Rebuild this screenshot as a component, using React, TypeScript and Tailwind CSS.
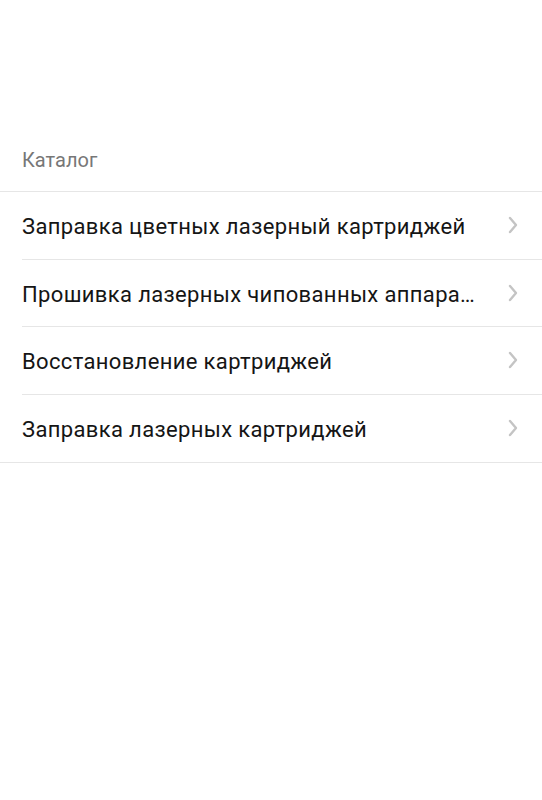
const items = [
  "Заправка цветных лазерный картриджей",
  "Прошивка лазерных чипованных аппаратов",
  "Восстановление картриджей",
  "Заправка лазерных картриджей",
];

function Chevron() {
  return (
    <svg width="10" height="18" viewBox="0 0 10 18" fill="none" className="shrink-0">
      <path d="M2 2l6 7-6 7" stroke="#c4c4c4" strokeWidth="2.4" strokeLinecap="round" strokeLinejoin="round" />
    </svg>
  );
}

export default function App() {
  return (
    <main className="min-h-[800px] bg-white font-['Roboto',sans-serif]">
      <div className="flex h-[191px] items-end px-[22px] pb-[19px]">
        <h2 className="text-[20px] leading-[24px] text-[#777777]">Каталог</h2>
      </div>
      <ul className="border-y border-[#e6e6e6]">
        {items.map((t, i) => (
          <li key={t} className="pl-[22px]">
            <div
              className={
                "flex h-[67.5px] items-center gap-[30px] pr-[24px] " +
                (i < items.length - 1 ? "border-b border-[#e6e6e6]" : "")
              }
            >
              <span className="min-w-0 flex-1 truncate pt-[3px] text-[22px] tracking-[0.35px] text-[#151515]">{t}</span>
              <Chevron />
            </div>
          </li>
        ))}
      </ul>
    </main>
  );
}
